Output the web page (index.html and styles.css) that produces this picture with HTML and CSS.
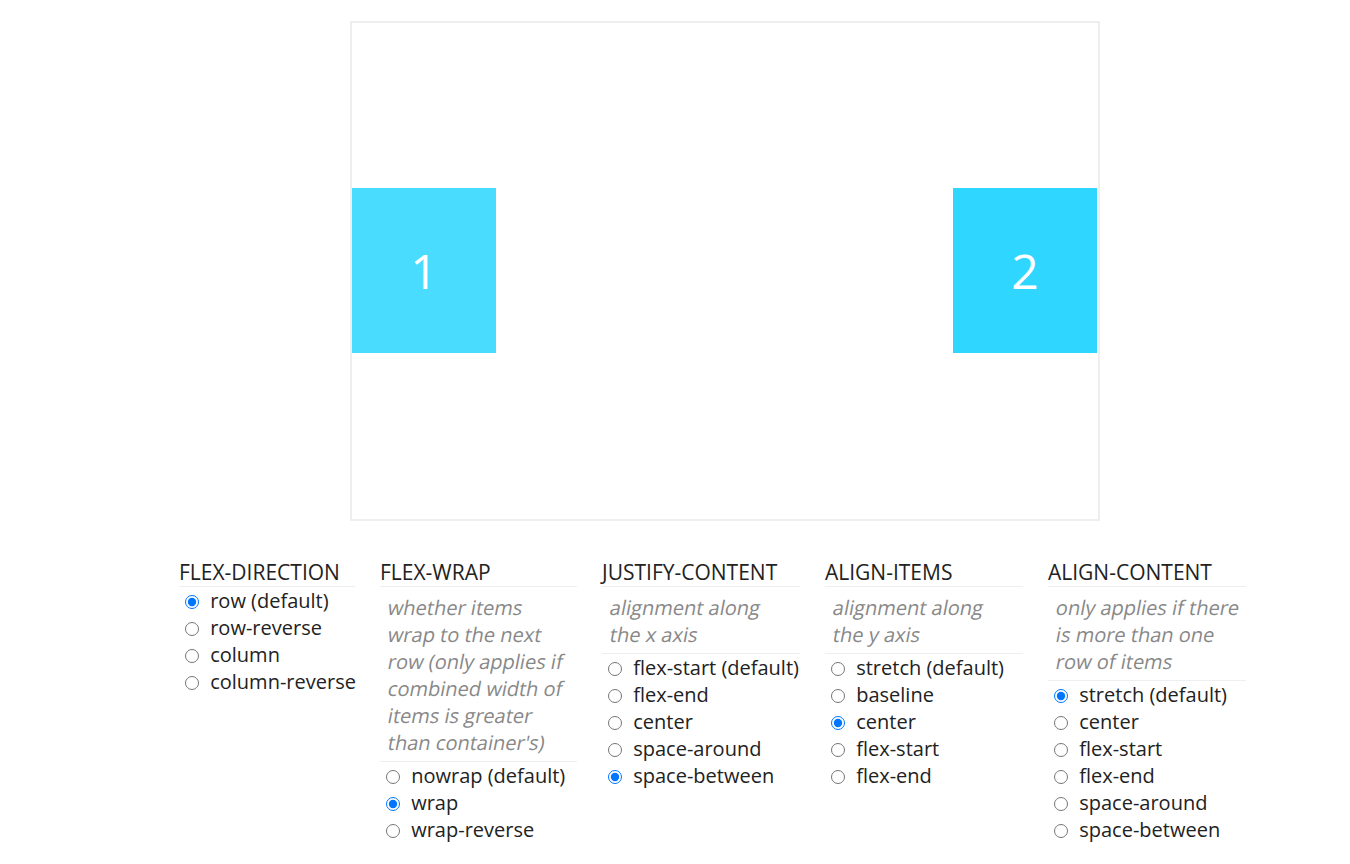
FILE: index.html
```html
<!DOCTYPE html>
<html>
<head>
    <title>Flexbox Playground</title>
    <link rel="stylesheet" href="styles.css">
</head>
<body>
    <div class="stage">
        <div class="box">
            <div class="item item-1">1</div>
            <div class="item item-2">2</div>
        </div>
    </div>

    <div class="controls">
        <div class="group group-narrow">
            <h3>flex-direction</h3>
            <label><input type="radio" name="dir" checked> row (default)</label>
            <label><input type="radio" name="dir"> row-reverse</label>
            <label><input type="radio" name="dir"> column</label>
            <label><input type="radio" name="dir"> column-reverse</label>
        </div>
        <div class="group group-wrap">
            <h3>flex-wrap</h3>
            <p class="desc">
                <span>whether items</span>
                <span>wrap to the next</span>
                <span>row (only applies if</span>
                <span>combined width of</span>
                <span>items is greater</span>
                <span>than container's)</span>
            </p>
            <label><input type="radio" name="wrap"> nowrap (default)</label>
            <label><input type="radio" name="wrap" checked> wrap</label>
            <label><input type="radio" name="wrap"> wrap-reverse</label>
        </div>
        <div class="group">
            <h3>justify-content</h3>
            <p class="desc">
                <span>alignment along</span>
                <span>the x axis</span>
            </p>
            <label><input type="radio" name="jc"> flex-start (default)</label>
            <label><input type="radio" name="jc"> flex-end</label>
            <label><input type="radio" name="jc"> center</label>
            <label><input type="radio" name="jc"> space-around</label>
            <label><input type="radio" name="jc" checked> space-between</label>
        </div>
        <div class="group">
            <h3>align-items</h3>
            <p class="desc">
                <span>alignment along</span>
                <span>the y axis</span>
            </p>
            <label><input type="radio" name="ai"> stretch (default)</label>
            <label><input type="radio" name="ai"> baseline</label>
            <label><input type="radio" name="ai" checked> center</label>
            <label><input type="radio" name="ai"> flex-start</label>
            <label><input type="radio" name="ai"> flex-end</label>
        </div>
        <div class="group">
            <h3>align-content</h3>
            <p class="desc">
                <span>only applies if there</span>
                <span>is more than one</span>
                <span>row of items</span>
            </p>
            <label><input type="radio" name="ac" checked> stretch (default)</label>
            <label><input type="radio" name="ac"> center</label>
            <label><input type="radio" name="ac"> flex-start</label>
            <label><input type="radio" name="ac"> flex-end</label>
            <label><input type="radio" name="ac"> space-around</label>
            <label><input type="radio" name="ac"> space-between</label>
        </div>
    </div>
</body>
</html>
```

FILE: styles.css
```css
/* playground layout */
body {
    margin: 0;
    background: #fff;
    font-family: "Open Sans", sans-serif;
    color: #222;
}

.stage {
    padding: 21px 0 0 350px;
}

.box {
    width: 746px;
    height: 496px;
    border: 2px solid #eee;
    display: flex;
    flex-wrap: wrap;
    justify-content: space-between;
    align-items: center;
}

.item {
    width: 144px;
    height: 165px;
    margin-top: -1px;
    display: flex;
    justify-content: center;
    align-items: center;
    color: #fff;
    font-size: 48px;
}

.item-1 {
    background-color: #4adcff;
}

.item-2 {
    background-color: #2fd6ff;
    margin-right: 1px;
}

.controls {
    display: flex;
    gap: 25px;
    padding: 38px 0 0 179px;
    align-items: flex-start;
}

.group {
    width: 198px;
}

.group-narrow {
    width: 176px;
}

.group-wrap {
    width: 197px;
}

.group h3 {
    margin: 0;
    font-size: 21px;
    font-weight: normal;
    text-transform: uppercase;
    line-height: 27px;
    border-bottom: 1px solid #eee;
    color: #222;
}

/* slanted regular face, like the page's synthesized italic */
.desc {
    margin: 0;
    padding: 7px 8px 5px 7px;
    font-size: 20px;
    line-height: 27px;
    color: #888;
    border-bottom: 1px solid #eee;
}

.desc span {
    display: block;
    white-space: nowrap;
    transform: skewX(-11deg);
    transform-origin: 0 75%;
}

.group label {
    display: block;
    font-size: 20px;
    line-height: 27px;
    color: #222;
    white-space: nowrap;
}

.group label input {
    margin: 0 6px 0 6px;
    width: 14px;
    height: 14px;
    vertical-align: -1px;
}
```
